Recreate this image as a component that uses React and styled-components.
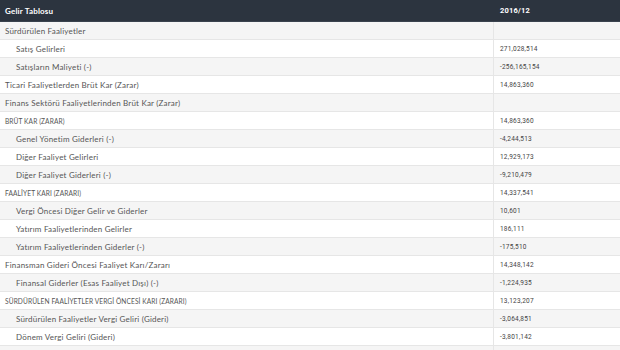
import React from 'react';
import styled, { createGlobalStyle } from 'styled-components';

const GlobalStyle = createGlobalStyle`
  html, body {
    margin: 0;
    padding: 0;
    background: #fff;
  }
`;

const Table = styled.div`
  width: 620px;
  display: grid;
  grid-template-columns: 494px 1fr;
  font-family: Lato, "Open Sans", sans-serif;
  font-size: 8px;
  letter-spacing: 0.2px;
  color: #555;
`;

const HeadCell = styled.div`
  height: 22px;
  box-sizing: border-box;
  display: flex;
  align-items: center;
  padding-left: ${p => (p.num ? '6px' : '5px')};
  background: #2c343f;
  color: #fff;
  font-weight: 700;
  border-bottom: 1px solid #3a434e;
  font-family: ${p => (p.num ? 'Roboto, sans-serif' : 'inherit')};
  font-size: ${p => (p.num ? '7.5px' : '8px')};
`;

const Cell = styled.div`
  height: 18px;
  box-sizing: border-box;
  display: flex;
  align-items: center;
  white-space: nowrap;
  background: ${p => (p.odd ? '#f5f5f5' : '#fff')};
  border-bottom: 1px solid #e6e6e6;
  padding-left: ${p => (p.indent ? '16px' : '5px')};
  border-right: ${p => (p.label ? '1px solid #e6e6e6' : 'none')};
  font-size: ${p => (p.caps ? '6.6px' : '8px')};
  letter-spacing: ${p => (p.caps ? '0.1px' : '0.2px')};
`;

const NumCell = styled(Cell)`
  padding-left: 6px;
  font-family: Roboto, sans-serif;
  font-size: 6.5px;
  letter-spacing: 0.2px;
  color: #444;
`;

const rows = [
  ['Sürdürülen Faaliyetler', '', false],
  ['Satış Gelirleri', '271,028,514', true],
  ['Satışların Maliyeti (-)', '-256,165,154', true],
  ['Ticari Faaliyetlerden Brüt Kar (Zarar)', '14,863,360', false],
  ['Finans Sektörü Faaliyetlerinden Brüt Kar (Zarar)', '', false],
  ['BRÜT KAR (ZARAR)', '14,863,360', false, true],
  ['Genel Yönetim Giderleri (-)', '-4,244,513', true],
  ['Diğer Faaliyet Gelirleri', '12,929,173', true],
  ['Diğer Faaliyet Giderleri (-)', '-9,210,479', true],
  ['FAALİYET KARI (ZARARI)', '14,337,541', false, true],
  ['Vergi Öncesi Diğer Gelir ve Giderler', '10,601', true],
  ['Yatırım Faaliyetlerinden Gelirler', '186,111', true],
  ['Yatırım Faaliyetlerinden Giderler (-)', '-175,510', true],
  ['Finansman Gideri Öncesi Faaliyet Karı/Zararı', '14,348,142', false],
  ['Finansal Giderler (Esas Faaliyet Dışı) (-)', '-1,224,935', true],
  ['SÜRDÜRÜLEN FAALİYETLER VERGİ ÖNCESİ KARI (ZARARI)', '13,123,207', false, true],
  ['Sürdürülen Faaliyetler Vergi Geliri (Gideri)', '-3,064,851', true],
  ['Dönem Vergi Geliri (Gideri)', '-3,801,142', true],
  ['', '', true],
];

export default function App() {
  return (
    <>
      <GlobalStyle />
      <Table>
        <HeadCell>Gelir Tablosu</HeadCell>
        <HeadCell num>2016/12</HeadCell>
        {rows.map(([label, value, indent, caps], i) => (
          <React.Fragment key={i}>
            <Cell label odd={i % 2 === 0} indent={indent} caps={caps}>{label}</Cell>
            <NumCell odd={i % 2 === 0}>{value}</NumCell>
          </React.Fragment>
        ))}
      </Table>
    </>
  );
}
